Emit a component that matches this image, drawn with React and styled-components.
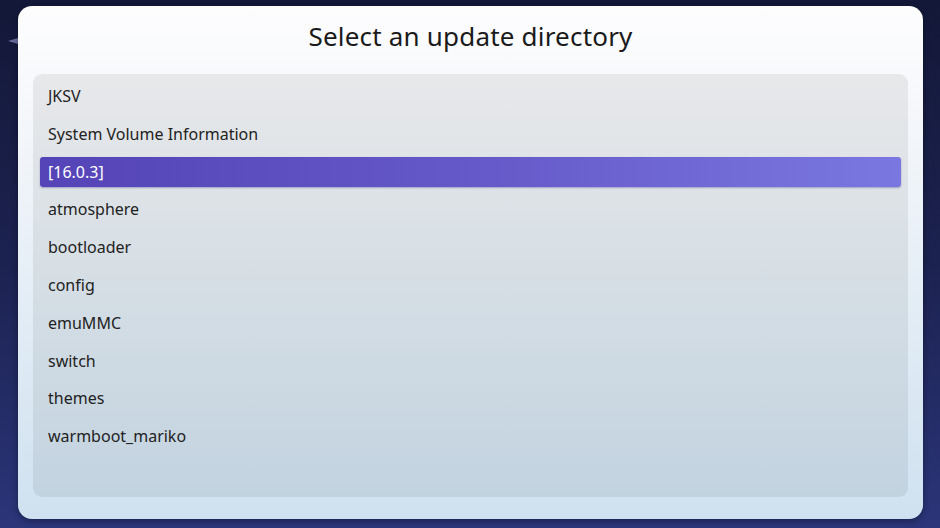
import React from "react";
import styled, { createGlobalStyle } from "styled-components";

const Global = createGlobalStyle`
  html, body { margin: 0; padding: 0; }
  body {
    width: 940px;
    height: 528px;
    overflow: hidden;
    background: linear-gradient(180deg, #131838 0%, #1c2250 50%, #2b3579 100%);
    font-family: "Noto Sans", "Open Sans", sans-serif;
  }
`;

const Screen = styled.div`
  position: relative;
  width: 940px;
  height: 528px;
  box-sizing: border-box;
  padding: 6px 17px 9px 18px;
  display: flex;
`;

const Sparkle = styled.svg`
  position: absolute;
  left: 8px;
  top: 33px;
`;

const Dialog = styled.div`
  position: relative;
  flex: 1;
  display: flex;
  flex-direction: column;
  border-radius: 14px;
  background: linear-gradient(180deg, #fdfdfe 0%, #f3f6fa 25%, #cfe1f0 100%);
  box-shadow: 0 2px 6px rgba(0, 0, 0, 0.35);
  padding: 0 15px 22px 15px;
`;

const Title = styled.h1`
  margin: 0;
  height: 68px;
  display: flex;
  align-items: center;
  justify-content: center;
  font-size: 26px;
  font-weight: 400;
  color: #1a1a1a;
  padding-bottom: 9px;
  box-sizing: border-box;
  letter-spacing: 0.2px;
`;

const List = styled.div`
  flex: 1;
  border-radius: 9px;
  background: linear-gradient(180deg, #e7e8ea 0%, #d7dfe5 45%, #c2d3e0 100%);
  padding: 7px 7px;
  display: flex;
  flex-direction: column;
  gap: 7.8px;
`;

const Row = styled.div`
  height: 30px;
  display: flex;
  align-items: center;
  padding-left: 8px;
  border-radius: 3px;
  font-size: 16px;
  color: ${(p) => (p.$selected ? "#ffffff" : "#222222")};
  background: ${(p) =>
    p.$selected
      ? "linear-gradient(90deg, #5444b7 0%, #6558c8 50%, #7a78e0 100%)"
      : "transparent"};
  box-shadow: ${(p) => (p.$selected ? "0 1px 2px rgba(40,30,120,0.35)" : "none")};
`;

const items = [
  "JKSV",
  "System Volume Information",
  "[16.0.3]",
  "atmosphere",
  "bootloader",
  "config",
  "emuMMC",
  "switch",
  "themes",
  "warmboot_mariko",
];

export default function App() {
  return (
    <>
      <Global />
      <Screen>
        <Sparkle width="14" height="16" viewBox="0 0 14 16">
          <path d="M0 8 L10 5 L14 8 L10 11 Z" fill="#8a90c8" opacity="0.7" />
        </Sparkle>
        <Dialog>
          <Title>Select an update directory</Title>
          <List>
            {items.map((it, i) => (
              <Row key={it} $selected={i === 2}>
                {it}
              </Row>
            ))}
          </List>
        </Dialog>
      </Screen>
    </>
  );
}
